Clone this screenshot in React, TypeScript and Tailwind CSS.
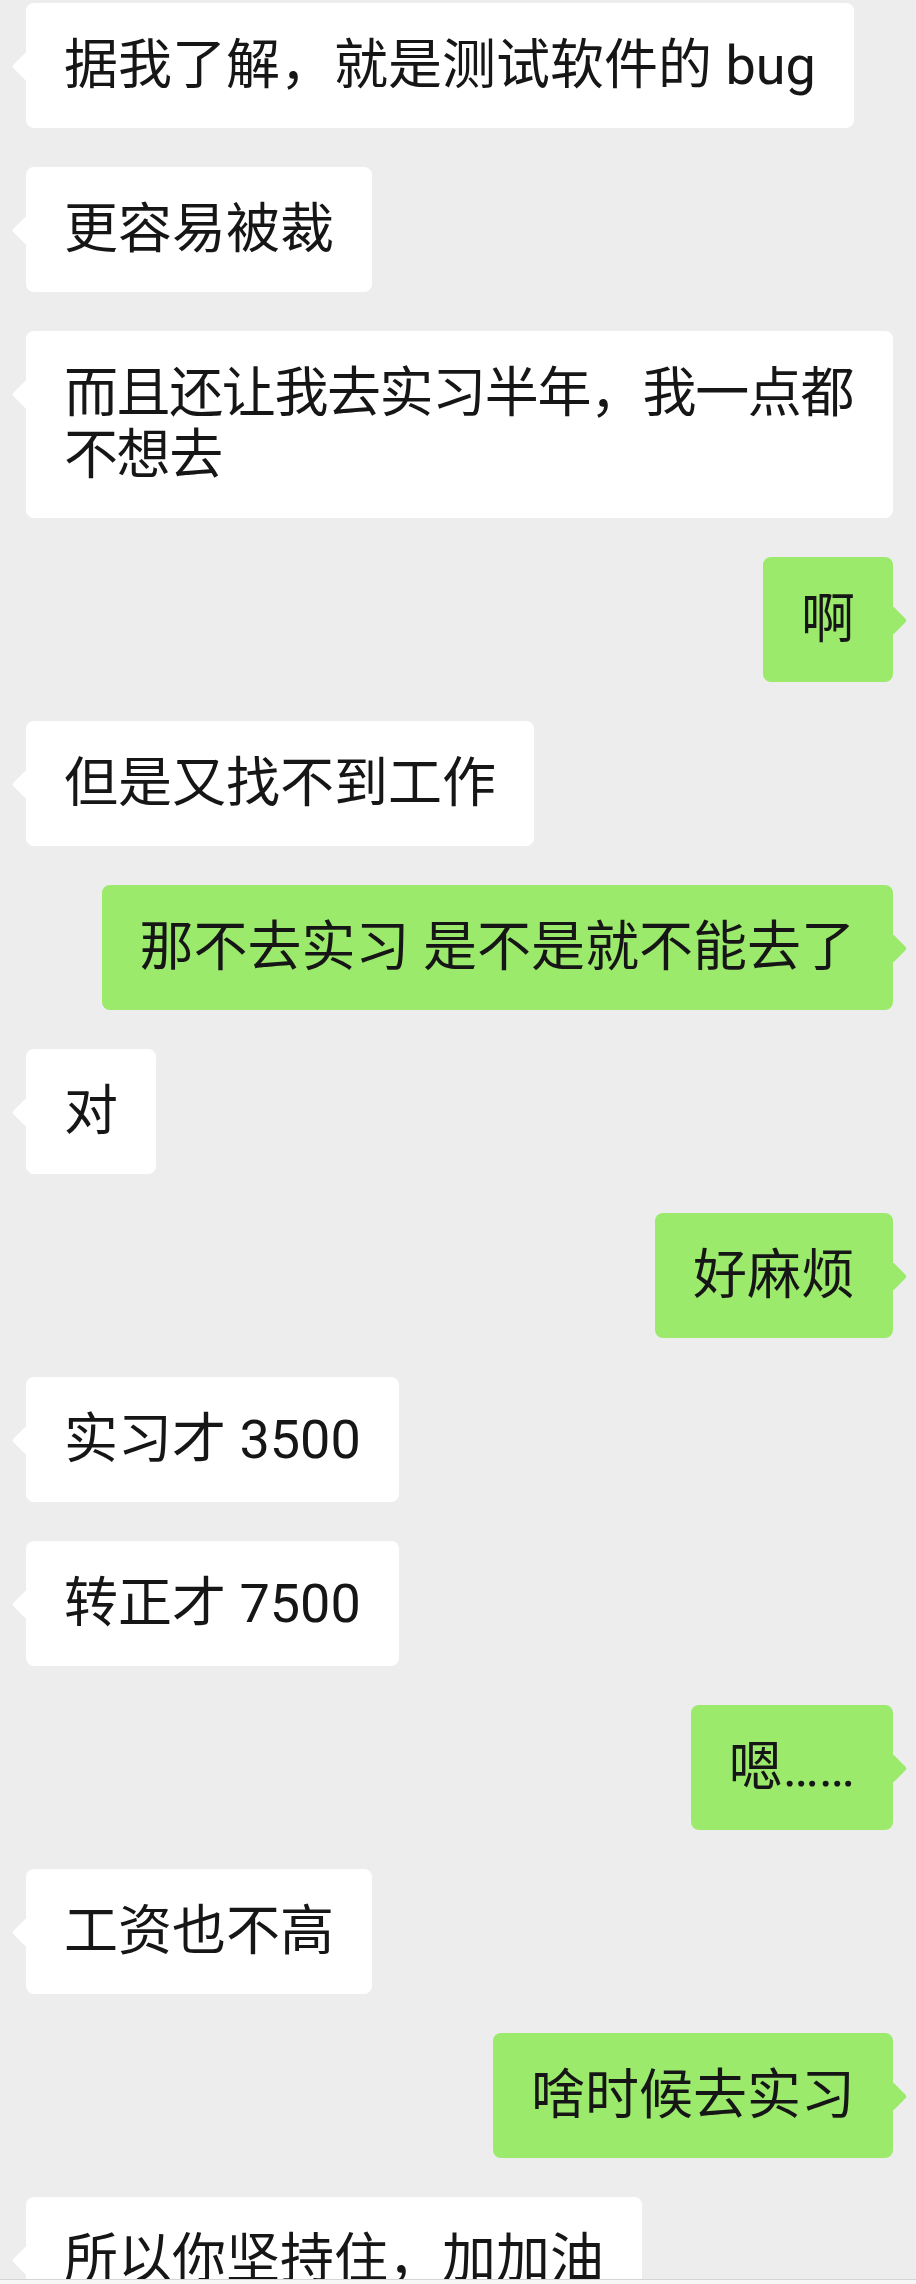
import { clsx } from 'clsx';

type Msg = { from: 'them' | 'me'; text: string; tight?: boolean };

const MESSAGES: Msg[] = [
    { from: 'them', text: '据我了解，就是测试软件的 bug' },
    { from: 'them', text: '更容易被裁' },
    { from: 'them', text: '而且还让我去实习半年，我一点都不想去', tight: true },
    { from: 'me', text: '啊' },
    { from: 'them', text: '但是又找不到工作' },
    { from: 'me', text: '那不去实习 是不是就不能去了' },
    { from: 'them', text: '对' },
    { from: 'me', text: '好麻烦' },
    { from: 'them', text: '实习才 3500' },
    { from: 'them', text: '转正才 7500' },
    { from: 'me', text: '嗯……' },
    { from: 'them', text: '工资也不高' },
    { from: 'me', text: '啥时候去实习' },
    { from: 'them', text: '所以你坚持住，加加油' },
];

function Bubble({ msg }: { msg: Msg }) {
    const mine = msg.from === 'me';
    return (
        <div className={clsx('flex', mine ? 'justify-end' : 'justify-start')}>
            <div
                className={clsx(
                    'relative max-w-[868px] rounded-lg px-[38px] py-[31.5px] text-[54px] leading-[62px] text-[#161616]',
                    mine ? 'bg-[#9bea6c]' : 'bg-white',
                    msg.tight && 'tracking-[-1.4px]'
                )}
            >
                {/* tail */}
                <span
                    className={clsx(
                        'absolute top-[53px] h-[21px] w-[21px] rotate-45 rounded-[3px]',
                        mine ? 'right-[-10px] bg-[#9bea6c]' : 'left-[-10px] bg-white'
                    )}
                />
                <span className="relative">{msg.text}</span>
            </div>
        </div>
    );
}

export default function App() {
    return (
        <div className="flex h-[2284px] w-[916px] flex-col overflow-hidden bg-[#ededed] font-[Roboto,'Noto_Sans_CJK_SC',sans-serif]">
            <div className="flex min-h-0 flex-1 flex-col gap-[39px] overflow-hidden pl-[26px] pr-[23px] pt-[3px]">
                {MESSAGES.map((m, i) => (
                    <Bubble key={i} msg={m} />
                ))}
            </div>
            <div className="h-[5px] shrink-0 border-t border-[#d4d4d4] bg-[#f7f7f7]" />
        </div>
    );
}
